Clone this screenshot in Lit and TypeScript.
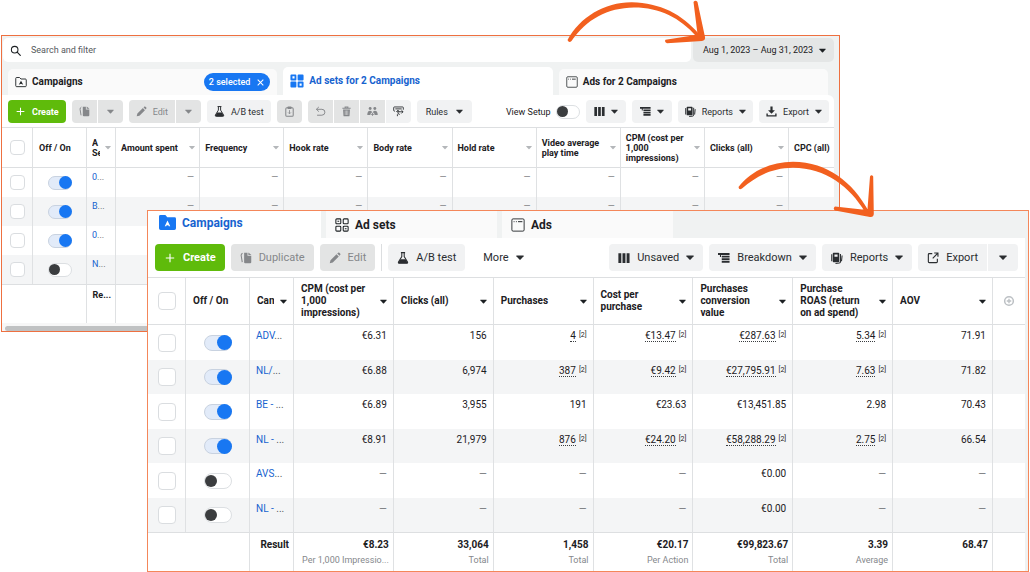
import { LitElement, html, css, svg, nothing, TemplateResult } from "lit";
import { customElement } from "lit/decorators.js";
import { classMap } from "lit/directives/class-map.js";

const glyphs: Record<string, TemplateResult> = {
  search: svg`<circle cx="6.8" cy="6.8" r="4.8" fill="none" stroke="currentColor" stroke-width="1.5"/><path d="M10.4 10.4L15 15" stroke="currentColor" stroke-width="1.7" stroke-linecap="round"/>`,
  folder: svg`<path d="M1 13V3.2Q1 2 2.2 2H6L8 4H13.8Q15 4 15 5.2V13Q15 14.2 13.8 14.2H2.2Q1 14.2 1 13Z" fill="none" stroke="currentColor" stroke-width="1.2"/><path d="M5 11.6L8 6.2L11 11.6L8 10.4Z" fill="currentColor"/>`,
  folderFill: svg`<path d="M0 13.4V2.4Q0 1 1.4 1H6L7.8 3H14.6Q16 3 16 4.4V13.4Q16 15 14.4 15H1.6Q0 15 0 13.4Z" fill="currentColor"/><path d="M5.4 11.6L8 6L10.6 11.6H9.2L8.8 10.6H7.2L6.8 11.6Z" fill="#fff"/>`,
  gridFill: svg`<path fill-rule="evenodd" fill="currentColor" d="M1.6 0.5H6.2Q7.3 .5 7.3 1.6V6.2Q7.3 7.3 6.2 7.3H1.6Q.5 7.3 .5 6.2V1.6Q.5 .5 1.6 .5ZM2.8 2.6V5.2H5.2V2.6Z M9.8 .5H14.4Q15.5 .5 15.5 1.6V6.2Q15.5 7.3 14.4 7.3H9.8Q8.7 7.3 8.7 6.2V1.6Q8.7 .5 9.8 .5Z M1.6 8.7H6.2Q7.3 8.7 7.3 9.8V14.4Q7.3 15.5 6.2 15.5H1.6Q.5 15.5 .5 14.4V9.8Q.5 8.7 1.6 8.7Z M9.8 8.7H14.4Q15.5 8.7 15.5 9.8V14.4Q15.5 15.5 14.4 15.5H9.8Q8.7 15.5 8.7 14.4V9.8Q8.7 8.7 9.8 8.7ZM10.9 10.8V13.4H13.3V10.8Z"/>`,
  grid: svg`<g fill="none" stroke="currentColor" stroke-width="1.2"><rect x="1" y="1" width="5.6" height="5.6" rx="1"/><rect x="9.4" y="1" width="5.6" height="5.6" rx="1"/><rect x="1" y="9.4" width="5.6" height="5.6" rx="1"/><rect x="9.400" y="9.400" width="5.6" height="5.6" rx="1"/><path d="M2.800 3.800H4.800M11.200 12.200H13.200"/></g>`,
  window: svg`<rect x="1" y="1" width="14" height="14" rx="1.4" fill="none" stroke="currentColor" stroke-width="1"/><path d="M3 4.2H4M5.6 4.2H6.6M8 4.2H13" stroke="currentColor" stroke-width="1.1"/>`,
  plus: svg`<path d="M8 2.400V13.600M2.400 8H13.600" stroke="currentColor" stroke-width="1.500"/>`,
  copy: svg`<path d="M5.5 1H10V5H15V13.5Q15 15 13.5 15H7Q5.5 15 5.5 13.5Z" fill="currentColor"/><path d="M11.2 .8L15.2 4H11.2Z" fill="currentColor"/><path d="M3.4 1.6Q1.2 2.6 1.6 5L3 13.6" fill="none" stroke="currentColor" stroke-width="1.4"/>`,
  pencil: svg`<path d="M1 15L2 11L10 3L13 6L5 14Z M11 2L12.2 .9Q13 .3 13.8 1L15 2.2Q15.7 3 15 3.8L14 5Z" fill="currentColor"/>`,
  flask: svg`<path d="M5.2 .8H10.8M6.4 1V6L2 13.2Q1.4 15 3.2 15H12.8Q14.6 15 14 13.2L9.6 6V1" fill="none" stroke="currentColor" stroke-width="1.4"/><path d="M4.6 9.6H11.4L14 14Q14 15 12.8 15H3.2Q2 15 2 14Z" fill="currentColor"/>`,
  clipboard: svg`<rect x="2.6" y="2.6" width="10.8" height="12.4" rx="1.6" fill="none" stroke="currentColor" stroke-width="1.5"/><rect x="5" y=".8" width="6" height="3.4" rx="1" fill="currentColor"/><path d="M8 6V11M6 9.4L8 11.4L10 9.4" fill="none" stroke="currentColor" stroke-width="1.2"/>`,
  undo: svg`<path d="M5.6 1.4L2 4.8L5.6 8.2M2 4.8H10Q14.4 4.8 14.4 9T10 13.4H3" fill="none" stroke="currentColor" stroke-width="1.4"/>`,
  trash: svg`<path d="M2 3.4H14M6 3V1.4H10V3" fill="none" stroke="currentColor" stroke-width="1.5"/><path fill-rule="evenodd" fill="currentColor" d="M3 5H13L12.4 14Q12.3 15 11.3 15H4.7Q3.7 15 3.6 14ZM5.6 6.6V13H6.4V6.6ZM7.6 6.6V13H8.4V6.6ZM9.6 6.6V13H10.4V6.6Z"/>`,
  people: svg`<g fill="currentColor"><circle cx="4.6" cy="3.6" r="2.1"/><circle cx="11.4" cy="3.6" r="2.1"/><path d="M.4 13Q.4 6.800 4.600 6.800Q7 6.800 7.600 9Q5 10 4.800 13Z M15.600 13Q15.600 6.800 11.400 6.800Q9 6.800 8.400 9Q11 10 11.200 13Z"/><path d="M8 10V14.400M5.800 12.200H10.200" stroke="currentColor" stroke-width="1.200"/></g>`,
  swap: svg`<path d="M3 7.400H2Q1 7.400 1 6.400V2.400Q1 1.400 2 1.400H14Q15 1.400 15 2.400V5.400M3.400 4.200H12.600M6.600 8.400H14.600M12.200 6L14.600 8.400L12.200 10.800M7.200 6.400V9.600Q7.200 12.200 9.600 12.200H10M4.800 8.600L7.200 6.200L9 8M6.400 12V14.800" fill="none" stroke="currentColor" stroke-width="1.300"/>`,
  columns: svg`<path d="M.5 1.5H4.4V14.5H.5ZM6 1.5H9.9V14.5H6ZM11.5 1.5H15.4V14.5H11.5Z" fill="currentColor"/>`,
  breakdown: svg`<path d="M0 1.4H15.400V4H0ZM5 5H15.4V7.4H5ZM5 8.4H15.4V10.8H5ZM5 11.8H15.4V14.2H5ZM2.6 4H4V6.500H2.6Z" fill="currentColor"/>`,
  reports: svg`<path fill-rule="evenodd" fill="currentColor" d="M3.4 1H10Q11 1 11 2V12.6Q11 13.6 10 13.6H3.4Q2.4 13.6 2.4 12.6V2Q2.4 1 3.4 1ZM4.6 3.4V6.4H8.8V3.4Z"/><path d="M1 3V12.4M12.6 2.6V13Q12.6 14.6 11 14.8L6 15.2M14.8 4.6L14 12.4" fill="none" stroke="currentColor" stroke-width="1.4"/>`,
  download: svg`<path d="M6.4 .6H9.6V6H13L8 11.2L3 6H6.4Z" fill="currentColor"/><path d="M1.6 11V14.4H14.4V11" fill="none" stroke="currentColor" stroke-width="2"/>`,
  open: svg`<path d="M7 2.2H3Q1.8 2.2 1.8 3.4V13Q1.8 14.2 3 14.2H12.6Q13.8 14.2 13.8 13V9M9.6 1.4H14.6V6.4M14.4 1.6L7.6 8.4" fill="none" stroke="currentColor" stroke-width="1.5"/>`,
  close: svg`<path d="M3 3L13 13M13 3L3 13" stroke="currentColor" stroke-width="1.8"/>`,
  add: svg`<circle cx="8" cy="8" r="5.8" fill="none" stroke="currentColor" stroke-width="2"/><path d="M8 5V11M5 8H11" stroke="currentColor" stroke-width="1.8"/>`,
};

const icon = (name: string, cls = "") =>
  html`<svg class="icon ${cls}" viewBox="0 0 16 16" aria-hidden="true">${glyphs[name]}</svg>`;

const caret = () =>
  html`<svg class="caret" viewBox="0 0 8 5" aria-hidden="true"><path d="M.6 .5H7.4Q8 .6 7.6 1.2L4.6 4.4Q4 5 3.4 4.4L.4 1.2Q0 .6 .6 .5Z" fill="currentColor"/></svg>`;

interface Cell { v: string; note?: boolean }
interface Row { name: string; on: boolean; cells: Cell[] }

const c = (v: string, note = false): Cell => ({ v, note });
const dash = c("—");

const adSetColumns = ["Amount spent", "Frequency", "Hook rate", "Body rate", "Hold rate",
  "Video average play time", "CPM (cost per 1,000 impressions)", "Clicks (all)"];

const adSetRows: Row[] = [["0", true], ["B", true], ["0", true], ["N", false]].map(
  ([name, on]) => ({ name: name as string, on: on as boolean, cells: adSetColumns.map(() => dash) }));

const campaignColumns = ["CPM (cost per 1,000 impressions)", "Clicks (all)", "Purchases",
  "Cost per purchase", "Purchases conversion value", "Purchase ROAS (return on ad spend)", "AOV"];

const campaignRows: Row[] = [
  { name: "ADV", on: true, cells: [c("€6.31"), c("156"), c("4", true), c("€13.47", true), c("€287.63", true), c("5.34", true), c("71.91")] },
  { name: "NL/", on: true, cells: [c("€6.88"), c("6,974"), c("387", true), c("€9.42", true), c("€27,795.91", true), c("7.63", true), c("71.82")] },
  { name: "BE - ", on: true, cells: [c("€6.89"), c("3,955"), c("191"), c("€23.63"), c("€13,451.85"), c("2.98"), c("70.43")] },
  { name: "NL - ", on: true, cells: [c("€8.91"), c("21,979"), c("876", true), c("€24.20", true), c("€58,288.29", true), c("2.75", true), c("66.54")] },
  { name: "AVS", on: false, cells: [dash, dash, dash, dash, c("€0.00"), dash, dash] },
  { name: "NL - ", on: false, cells: [dash, dash, dash, dash, c("€0.00"), dash, dash] },
];

const campaignTotals = [["€8.23", "Per 1,000 Impressio..."], ["33,064", "Total"], ["1,458", "Total"],
  ["€20.17", "Per Action"], ["€99,823.67", "Total"], ["3.39", "Average"], ["68.47", ""]];

@customElement("app-root")
export class AppRoot extends LitElement {
  static styles = css`
    :host {
      display: block;
      background: #fff;
      color: #1c2023;
      font-family: Roboto, "Liberation Sans", sans-serif;
    }
    * { box-sizing: border-box; }
    button, input { font: inherit; color: inherit; margin: 0; }
    button { border: 0; padding: 0; background: none; cursor: pointer; white-space: nowrap; }
    a { color: #1763cf; text-decoration: none; }

    .stage { display: grid; align-items: start; position: relative; overflow: hidden; }
    .panel { grid-area: 1 / 1; min-width: 0; background: #f0f2f2; overflow: hidden; }
    .back {
      --check: 15px; --sw: 24px; --sh: 14px; --knob: 13px; --off: 11px; --icon: 11px;
      margin: 35px 190px 0 1px;
      border: 1px solid #ee7040;
      font-size: 9px;
      line-height: 10px;
    }
    .front {
      --check: 18px; --sw: 28px; --sh: 16px; --knob: 15px; --off: 12px; --icon: 12px;
      margin: 210px 1px 0 147px;
      border: 1px solid #f4875a;
      font-size: 10px;
      line-height: 12px;
    }
    .body { background: #fff; }
    .back .body { margin-right: 5px; border-radius: 0 6px 0 0; }
    .front .body { margin-right: 3px; }

    .icon { width: var(--icon); height: var(--icon); flex: none; display: block; }
    .caret { width: 7px; height: 5px; flex: none; display: block; }
    .front .caret { width: 8px; }

    .searchbar { display: flex; gap: 2px; padding: 2px 5px 0 1px; }
    .search {
      flex: 1; display: flex; align-items: center; gap: 10px; height: 24px;
      padding-left: 7px; background: #fff; border-radius: 5px;
    }
    .search input { flex: 1; border: 0; outline: 0; padding: 0; background: none; }
    .search input::placeholder { color: #55595d; opacity: 1; }
    .date {
      display: flex; align-items: center; justify-content: space-between; width: 141px;
      padding: 0 8px 0 10px; background: #e4e6e6; border-radius: 5px;
    }

    .tabs { display: flex; align-items: flex-end; }
    .tab { display: flex; align-items: center; background: #fafafa; font-weight: 700; text-align: left; }
    .tab.active { background: #fff; color: #1763cf; }
    .tab.active .icon { color: #1877f2; }
    .back .tabs { gap: 6px; padding: 5px 11px 0 6px; font-size: 10px; line-height: 12px; --icon: 12px; }
    .back .tab { flex: 1; height: 26px; gap: 5px; padding: 0 7px; border-radius: 5px 5px 0 0; }
    .back .tab.active { height: 28px; --icon: 14px; }
    .front .tabs { gap: 5px; font-size: 12px; line-height: 14px; --icon: 14px; }
    .front .tab { width: 171px; height: 27px; gap: 6px; padding: 0 9px; }
    .front .tab.active { width: 173px; padding: 0 11px 4px; --icon: 17px; }
    .chip {
      display: flex; align-items: center; gap: 6px; height: 18px; padding: 0 5px;
      margin-left: auto; border-radius: 9px; background: #1877f2; color: #fff;
      font-size: 9px; font-weight: 500; --icon: 9px;
    }

    .tools { display: flex; align-items: center; }
    .back .tools { gap: 6px; padding: 5px 5px 4px 6px; }
    .front .tools { gap: 6px; padding: 6px 7px; font-size: 11px; }
    .group { display: flex; gap: 1px; }
    .group .btn { border-radius: 0; }
    .group .btn:first-child { border-radius: 4px 0 0 4px; }
    .group .btn:last-child { border-radius: 0 4px 4px 0; }
    .btn {
      display: flex; align-items: center; justify-content: center; gap: 6px;
      background: #f1f2f3; border-radius: 4px; color: #2a2d30;
    }
    .back .btn { height: 23px; padding: 0 7px; }
    .back .btn.wide { padding: 0 9px; gap: 8px; }
    .back .btn.bare { padding: 0 8px; }
    .front .btn { height: 27px; padding: 0 9px; gap: 7px; }
    .back .square { width: 25px; padding: 0; }
    .front .square { width: 30px; padding: 0; }
    .btn.create { background: #5fbb0b; color: #fff; font-weight: 700; }
    .btn.muted { background: #e3e4e4; color: #85878a; }
    .front .btn.plain { background: none; padding: 0 12px; }
    .rule { width: 1px; height: 27px; background: #dcdee0; }
    .push { margin-left: auto; }
    .setup { display: flex; align-items: center; gap: 5px; margin-left: auto; }

    table { width: 100%; table-layout: fixed; border-collapse: separate; border-spacing: 0; border-top: 1px solid #dddfe1; }
    th, td { padding: 0; border-right: 1px solid #dfe1e3; text-align: right; vertical-align: top; font-weight: 400; }
    th:last-child, td:last-child { border-right: 0; }
    thead th { text-align: left; vertical-align: middle; font-weight: 700; border-bottom: 1px solid #dddfe1; }
    tbody tr:nth-child(even) { background: #f4f5f6; }
    tfoot td { border-top: 1px solid #dddfe1; font-weight: 700; }
    .head { display: flex; align-items: center; justify-content: space-between; }
    .clip { overflow: hidden; white-space: nowrap; }
    .mid { text-align: center; vertical-align: middle; }
    td.name { text-align: left; white-space: nowrap; overflow: hidden; color: #55595d; }
    .more { white-space: pre; }
    .dash { color: #77797c; }

    .back thead th { height: 40px; }
    .back tbody td { height: 29px; padding: 4px 5px 0; }
    .back tfoot td { height: 39px; padding: 5px 4px 0; }
    .back .head { padding: 0 4px 0 5px; }
    .back .switch-head { padding-left: 6px; }
    .back .head .caret { color: #b4b7ba; width: 6px; }
    .back .clip { width: 8px; }
    .front thead th { height: 47px; }
    .front tbody td { height: 34px; padding: 5px 6px 0; }
    .front tbody tr:nth-child(odd) td { height: 35px; }
    .front tfoot td { height: 39px; padding: 6px 4px 0; }
    .front .head { padding: 0 6px 0 7px; }
    .front .metric { gap: 10px; }
    .front .head .caret { width: 7px; }
    .front .switch-head { padding-left: 7px; }
    .front .clip { width: 17px; }
    .back tbody td.mid, .front tbody td.mid { padding: 0; vertical-align: middle; }

    .c-check { width: 31px; }
    .c-switch { width: 54px; }
    .c-name { width: 29px; }
    .c-end { width: 45px; }
    .front .c-check { width: 38px; }
    .front .c-switch { width: 64px; }
    .front .c-name { width: 44px; }
    .front .c-end { width: 32px; }

    .sub { display: block; margin-top: 3px; font-size: 9px; font-weight: 400; color: #85888c; white-space: nowrap; }
    .est { border-bottom: 1px dotted #3a3d40; line-height: 10px; display: inline-block; }
    .note { font-size: 7px; line-height: 6px; vertical-align: 2px; margin-left: 3px; }
    .add { color: #bcc0c4; margin: 0 auto; }

    .check {
      appearance: none; display: block; width: var(--check); height: var(--check);
      margin: 0 auto; border: 1px solid #dadde0; border-radius: 4px; background: #fff;
    }
    .switch {
      appearance: none; display: flex; align-items: center; width: var(--sw); height: var(--sh);
      margin: 0 auto; border: 1px solid #dcdfe2; border-radius: 9px; background: #fff;
    }
    .switch::before { content: ""; width: var(--off); height: var(--off); border-radius: 50%; background: #3b3d3f; }
    .switch:checked { justify-content: flex-end; background: #e2ebf9; border-color: #c8d2e0; }
    .switch:checked::before { width: var(--knob); height: var(--knob); margin-right: -1px; flex: none; background: #1877f2; }

    .scroll { height: 8px; padding: 3px 0 0 3px; background: #f7f7f7; }
    .thumb { height: 5px; border-radius: 3px; background: #c0c2c3; }
    .arrows { position: absolute; top: 0; right: 0; width: 480px; height: 230px; pointer-events: none; }
  `;

  private header(columns: string[], name: TemplateResult, end: TemplateResult) {
    return html`
      <colgroup>
        <col class="c-check"><col class="c-switch"><col class="c-name">
        ${columns.map(() => html`<col>`)}
        <col class="c-end">
      </colgroup>
      <thead>
        <tr>
          <th><input class="check" type="checkbox" aria-label="Select all"></th>
          <th class="switch-head">Off / On</th>
          <th><div class="head">${name}${caret()}</div></th>
          ${columns.map((col) => html`<th><div class="head metric"><span>${col}</span>${caret()}</div></th>`)}
          <th>${end}</th>
        </tr>
      </thead>`;
  }

  private value(x: Cell) {
    if (x.note) return html`<span class="est">${x.v}</span><span class="note">[2]</span>`;
    return x === dash ? html`<span class="dash">${x.v}</span>` : x.v;
  }

  private rows(rows: Row[]) {
    return html`<tbody>${rows.map((r) => html`
      <tr>
        <td class="mid"><input class="check" type="checkbox" aria-label="Select row"></td>
        <td class="mid"><input class="switch" type="checkbox" role="switch" aria-label="Off / On" .checked=${r.on}></td>
        <td class="name"><a class="more" href="#">${r.name}</a>...</td>
        ${r.cells.map((x) => html`<td>${this.value(x)}</td>`)}
        <td></td>
      </tr>`)}</tbody>`;
  }

  private btn(label: string, name: string, cls: Record<string, boolean> = {}, drop = false) {
    return html`<button class=${classMap({ btn: true, ...cls })} aria-label=${label || "Options"}>
      ${name ? icon(name) : nothing}${label && !cls.bare && !cls.square ? html`<span>${label}</span>` : nothing}${drop ? caret() : nothing}
    </button>`;
  }

  private backPanel() {
    return html`<section class="panel back" aria-label="Ad sets">
      <div class="searchbar">
        <label class="search">${icon("search")}<input type="text" placeholder="Search and filter" aria-label="Search and filter"></label>
        <button class="date"><span>Aug 1, 2023 – Aug 31, 2023</span>${caret()}</button>
      </div>
      <div class="tabs">
        <div class="tab">${icon("folder")}<span>Campaigns</span>
          <button class="chip"><span>2 selected</span>${icon("close")}</button></div>
        <button class="tab active">${icon("gridFill")}<span>Ad sets for 2 Campaigns</span></button>
        <button class="tab">${icon("window")}<span>Ads for 2 Campaigns</span></button>
      </div>
      <div class="body">
        <div class="tools">
          ${this.btn("Create", "plus", { create: true })}
          <div class="group">${this.btn("Duplicate", "copy", { muted: true, square: true })}${this.btn("", "", { muted: true, square: true }, true)}</div>
          <div class="group">${this.btn("Edit", "pencil", { muted: true })}${this.btn("", "", { muted: true, square: true }, true)}</div>
          ${this.btn("A/B test", "flask")}
          ${this.btn("Paste", "clipboard", { muted: true, square: true })}
          <div class="group">
            ${this.btn("Undo", "undo", { muted: true, square: true })}
            ${this.btn("Delete", "trash", { muted: true, square: true })}
            ${this.btn("Audience", "people", { muted: true, square: true })}
            ${this.btn("Swap", "swap", { square: true })}
          </div>
          ${this.btn("Rules", "", { wide: true }, true)}
          <label class="setup">View Setup<input class="switch" type="checkbox" role="switch"></label>
          ${this.btn("Columns", "columns", { bare: true }, true)}
          ${this.btn("Breakdown", "breakdown", { bare: true }, true)}
          ${this.btn("Reports", "reports", {}, true)}
          ${this.btn("Export", "download", {}, true)}
        </div>
        <table>
          ${this.header(adSetColumns, html`<span class="clip">A<br>Se</span>`, html`<div class="head">CPC&nbsp;(all)</div>`)}
          ${this.rows(adSetRows)}
          <tfoot><tr><td colspan="2"></td><td>Re...</td>${adSetColumns.map(() => html`<td></td>`)}<td></td></tr></tfoot>
        </table>
        <div class="scroll"><div class="thumb"></div></div>
      </div>
    </section>`;
  }

  private frontPanel() {
    return html`<section class="panel front" aria-label="Campaigns">
      <div class="tabs">
        <button class="tab active">${icon("folderFill")}<span>Campaigns</span></button>
        <button class="tab">${icon("grid")}<span>Ad sets</span></button>
        <button class="tab">${icon("window")}<span>Ads</span></button>
      </div>
      <div class="body">
        <div class="tools">
          ${this.btn("Create", "plus", { create: true })}
          ${this.btn("Duplicate", "copy", { muted: true })}
          ${this.btn("Edit", "pencil", { muted: true })}
          <span class="rule"></span>
          ${this.btn("A/B test", "flask")}
          ${this.btn("More", "", { plain: true }, true)}
          ${this.btn("Unsaved", "columns", { push: true }, true)}
          ${this.btn("Breakdown", "breakdown", {}, true)}
          ${this.btn("Reports", "reports", {}, true)}
          <div class="group">${this.btn("Export", "open")}${this.btn("", "", { square: true }, true)}</div>
        </div>
        <table>
          ${this.header(campaignColumns, html`<span class="clip">Campaign</span>`, icon("add", "add"))}
          ${this.rows(campaignRows)}
          <tfoot><tr><td colspan="2"></td><td>Result</td>
            ${campaignTotals.map(([v, s]) => html`<td>${v}<span class="sub">${s}</span></td>`)}
            <td></td></tr></tfoot>
        </table>
      </div>
    </section>`;
  }

  render() {
    return html`<main class="stage">
      ${this.backPanel()}
      ${this.frontPanel()}
      <svg class="arrows" viewBox="550 0 480 230" aria-hidden="true">
        <g fill="#f2601f">
          <path d="M567.5 40C580 17 605 2 632 2.3C660 3 682 14 699 34L696 36C680 18 660 7.500 634 7.500C607 8 587 19 571.500 41Q569 43.500 567.500 40Z"/>
          <path d="M693.500 2Q695.500 -.5 697.500 2L705 37Q705.500 40.500 702 41L667 43.300Q664 42 665.500 39.700L693 35.500L697.500 34Z"/>
          <path d="M738.500 187C752 170 772 161.800 793 161.800C828 162 853 183 868 210L865 212C850 187 826 168 793 167.800C773 168 758 175 742 188.500Q739 190.500 738.500 187Z"/>
          <path d="M870 176.500Q871.500 174 873.200 176.500L873.800 214Q873.500 217.500 870 217L835 210.500Q832.500 208.500 835 206.500L862 209.500L867.500 209Z"/>
        </g>
      </svg>
    </main>`;
  }
}
